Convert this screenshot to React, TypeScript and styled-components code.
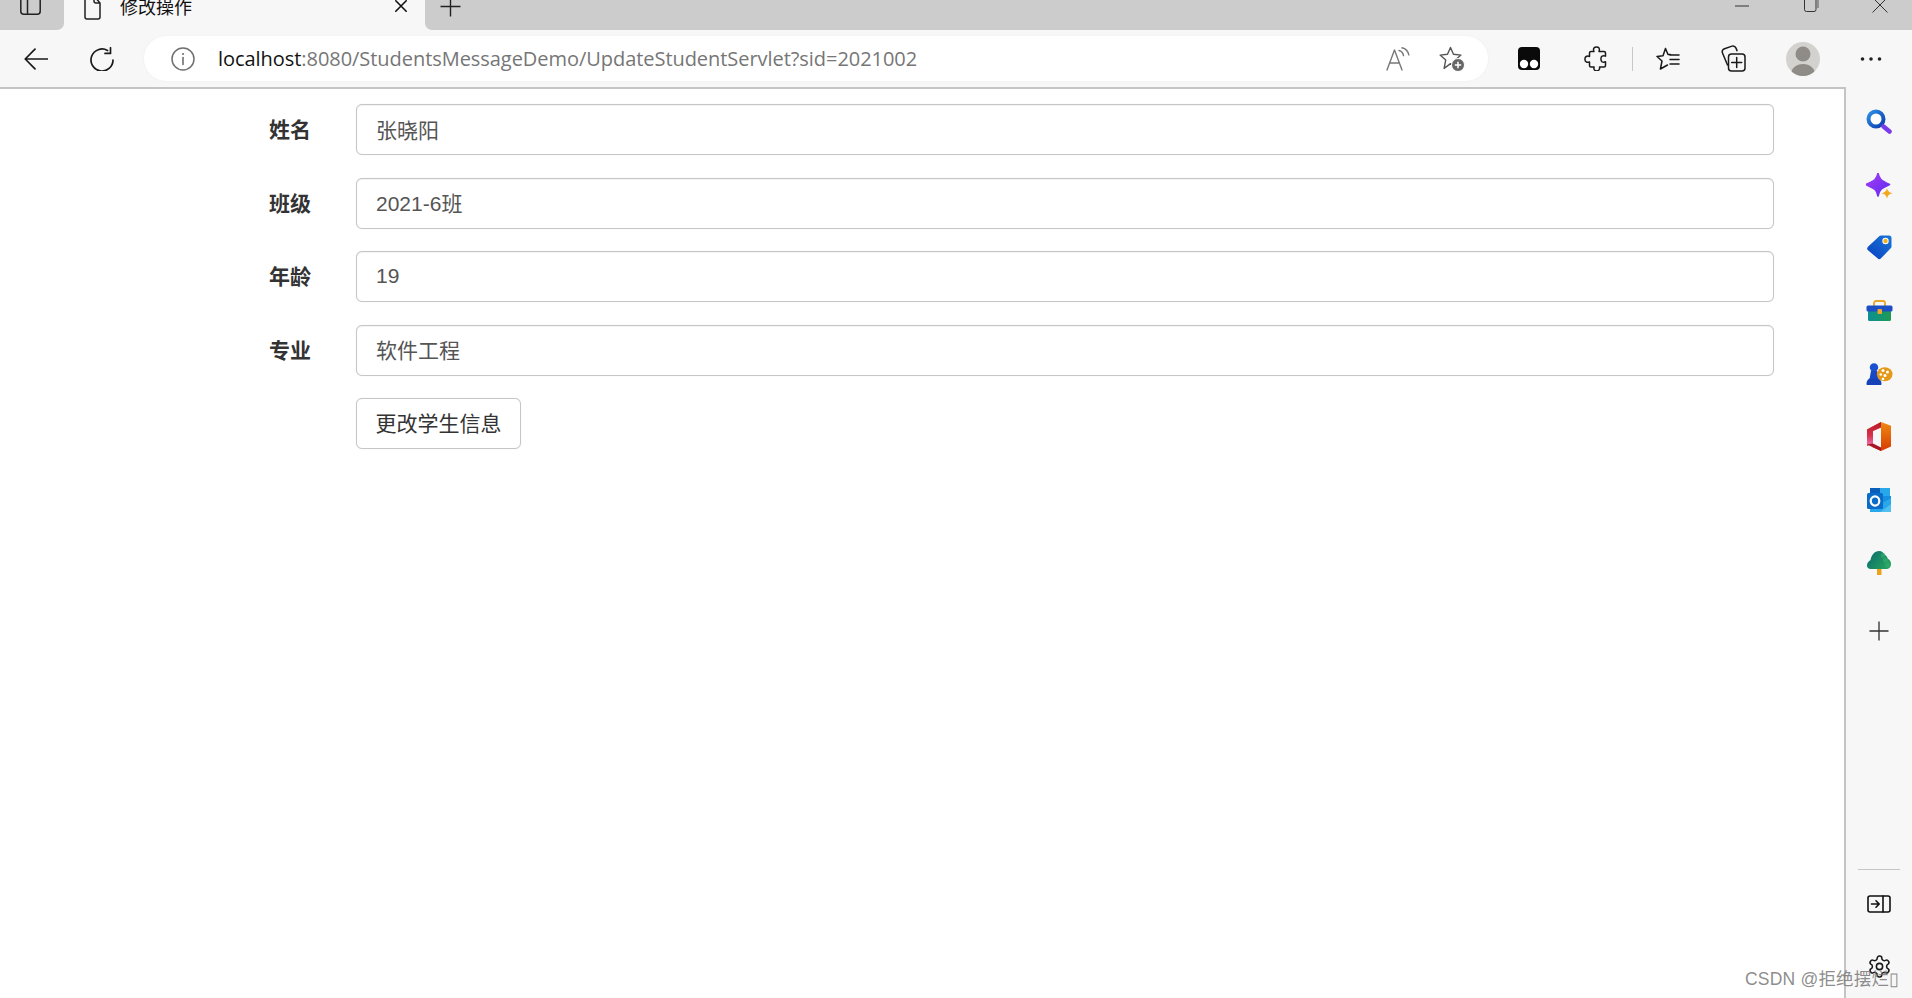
import React from "react";
import styled, { createGlobalStyle } from "styled-components";

const Global = createGlobalStyle`
  html, body { margin: 0; padding: 0; height: 100%; background: #fff; overflow: hidden; }
  #root { height: 100%; }
  * { box-sizing: border-box; }
`;

const CJK = `"Liberation Sans", "Noto Sans CJK SC", sans-serif`;

const Page = styled.div`
  position: relative;
  width: 1912px;
  height: 998px;
  display: flex;
  flex-direction: column;
  overflow: hidden;
  font-family: ${CJK};
`;

const TabStrip = styled.div`
  height: 30px;
  flex: none;
  display: flex;
  overflow: hidden;
  background: #f7f7f7;
`;

const StripPart = styled.div`
  height: 30px;
  padding-bottom: 18px;
  display: flex;
  align-items: center;
`;

const StripLeft = styled(StripPart)`
  width: 64px;
  padding-left: 20px;
  background: #cccccc;
  border-bottom-right-radius: 7px;
`;

const Tab = styled(StripPart)`
  width: 361px;
  padding-left: 20px;
  padding-right: 18px;
`;

const TabTitle = styled.span`
  flex: 1;
  margin-left: 19px;
  font-size: 18px;
  line-height: 20px;
  color: #111;
  font-family: "Noto Sans CJK SC", sans-serif;
`;

const StripRight = styled(StripPart)`
  flex: 1;
  padding-left: 15px;
  padding-right: 24px;
  background: #cccccc;
  border-bottom-left-radius: 7px;
`;

const Spacer = styled.div`
  flex: 1;
`;

const WindowButton = styled.span<{ $left: number }>`
  display: flex;
  margin-left: ${(p) => p.$left}px;
`;

const Toolbar = styled.div`
  height: 57px;
  flex: none;
  display: flex;
  align-items: center;
  padding: 0 29.5px 0 24px;
  background: #f7f7f7;
`;

const ToolSlot = styled.span<{ $left: number }>`
  display: flex;
  flex: none;
  align-items: center;
  justify-content: center;
  margin-left: ${(p) => p.$left}px;
`;

const ToolDivider = styled.span`
  flex: none;
  width: 1px;
  height: 24px;
  margin-left: 24px;
  background: #c8c8c8;
`;

const AddressBar = styled.div`
  flex: 1;
  height: 45px;
  margin-left: 30px;
  padding: 0 23px 0 27px;
  display: flex;
  align-items: center;
  background: #fff;
  border-radius: 23px;
  box-shadow: 0 0 3px rgba(0, 0, 0, 0.04);
`;

const Url = styled.div`
  flex: 1;
  margin-left: 23px;
  font-family: "Open Sans", sans-serif;
  font-size: 20px;
  letter-spacing: -0.05px;
  line-height: 24px;
  color: #767676;
  white-space: nowrap;
`;

const Host = styled.span`
  color: #111;
`;

const Body = styled.div`
  flex: 1;
  min-height: 0;
  display: flex;
`;

const Main = styled.main`
  flex: 1;
  border-top: 2px solid #c4c4c4;
  border-right: 2px solid #c4c4c4;
  background: #fff;
  padding: 15px 70px 0 269px;
`;

const Form = styled.form`
  display: flex;
  flex-direction: column;
  gap: 22.5px;
`;

const Row = styled.div`
  display: flex;
  align-items: center;
  height: 51px;
`;

const Label = styled.label`
  width: 87px;
  flex: none;
  padding-bottom: 3px;
  font-size: 21px;
  font-weight: 700;
  color: #333;
`;

const TextInput = styled.input`
  flex: 1;
  height: 51px;
  padding: 0 19px 2px;
  border: 1px solid #c6c6c6;
  border-radius: 6px;
  font-family: ${CJK};
  font-size: 21px;
  color: #555;
  background: #fff;
  outline: none;
  box-shadow: 0 0 1px rgba(0, 0, 0, 0.15), inset 0 1px 1px rgba(0, 0, 0, 0.05);
`;

const SubmitButton = styled.button`
  height: 51px;
  width: 165px;
  margin-left: 87px;
  padding: 0 0 4px;
  border: 1px solid #c6c6c6;
  border-radius: 6px;
  background: #fff;
  color: #333;
  font-family: ${CJK};
  font-size: 21px;
  box-shadow: 0 0 1px rgba(0, 0, 0, 0.15);
`;

const Sidebar = styled.aside`
  width: 66px;
  flex: none;
  display: flex;
  flex-direction: column;
  align-items: center;
  padding-top: 3px;
  background: #f7f7f7;
`;

const SideItem = styled.div<{ $drop?: number }>`
  height: 63px;
  width: 100%;
  flex: none;
  display: flex;
  align-items: center;
  justify-content: center;
  padding-top: ${(p) => p.$drop ?? 0}px;
`;

const SideRule = styled.div`
  width: 42px;
  height: 1px;
  flex: none;
  margin-top: auto;
  margin-bottom: 2px;
  background: #c6c6c6;
`;

const Watermark = styled.div`
  position: absolute;
  left: 1745px;
  top: 968px;
  font-family: "Liberation Sans", "Noto Sans CJK SC", sans-serif;
  font-size: 17.5px;
  line-height: 22px;
  letter-spacing: 0.2px;
  color: rgba(120, 120, 120, 0.85);
  white-space: nowrap;
`;

const Stroke = {
  fill: "none",
  stroke: "currentColor",
  strokeLinecap: "round" as const,
  strokeLinejoin: "round" as const,
};

const PanelIcon = () => (
  <svg width="21" height="18" viewBox="0 5 21 18" style={{ color: "#222" }}>
    <rect x="0.8" y="0.8" width="19.4" height="21.4" rx="3" {...Stroke} strokeWidth="1.5" />
    <path d="M7.5 1v21" {...Stroke} strokeWidth="1.5" />
  </svg>
);

const DocIcon = () => (
  <svg width="17" height="26" viewBox="0 0 17 26" style={{ marginTop: 2, color: "#222" }}>
    <path d="M1 3v20a2 2 0 0 0 2 2h11a2 2 0 0 0 2-2V9l-6-7H3a2 2 0 0 0-2 1z M10 2v5a2 2 0 0 0 2 2h4" {...Stroke} strokeWidth="1.5" />
  </svg>
);

const CloseSmall = () => (
  <svg width="12" height="12" viewBox="0 0 12 12" style={{ color: "#111" }}>
    <path d="M0.8 0.8l10.4 10.4M11.2 0.8L0.8 11.2" {...Stroke} strokeWidth="1.6" />
  </svg>
);

const PlusIcon = ({ size = 21, color = "#222" }: { size?: number; color?: string }) => (
  <svg width={size} height={size} viewBox="0 0 21 21" style={{ color }}>
    <path d="M10.5 0.5v20M0.5 10.5h20" fill="none" stroke="currentColor" strokeWidth="1.4" />
  </svg>
);

const Minimize = () => (
  <svg width="14" height="2" viewBox="0 0 14 2"><path d="M0 1h14" stroke="#333" strokeWidth="1" /></svg>
);

const Restore = () => (
  <svg width="15" height="20" viewBox="0 0 15 20" style={{ marginTop: -6 }}>
    <rect x="0.5" y="3.5" width="11.5" height="15" rx="2" fill="none" stroke="#333" />
    <path d="M14 3v12" stroke="#555" fill="none" />
  </svg>
);

const WindowClose = () => (
  <svg width="16" height="20" viewBox="0 0 16 20" style={{ marginTop: -2 }}>
    <path d="M0.5 2.5l15 15M15.5 2.5l-15 15" stroke="#333" fill="none" />
  </svg>
);

const BackIcon = () => (
  <svg width="24" height="22" viewBox="0 0 24 22" style={{ color: "#1a1a1a" }}>
    <path d="M1.5 11h22M11 1.2L1.2 11 11 20.8" {...Stroke} strokeWidth="1.7" />
  </svg>
);

const ReloadIcon = () => (
  <svg width="24" height="24" viewBox="0 0 24 24" style={{ color: "#1a1a1a" }}>
    <path d="M17.5 3.5A11 11 0 1 0 23 13" {...Stroke} strokeWidth="1.7" />
    <path d="M20.5 0.8V6.4H15" {...Stroke} strokeWidth="1.7" />
  </svg>
);

const InfoIcon = () => (
  <svg width="24" height="24" viewBox="0 0 24 24" style={{ color: "#707070" }}>
    <circle cx="12" cy="12" r="11" {...Stroke} strokeWidth="1.5" />
    <path d="M12 10.5v7" {...Stroke} strokeWidth="1.6" />
    <circle cx="12" cy="7" r="1.1" fill="currentColor" />
  </svg>
);

const ReadAloudIcon = () => (
  <svg width="24" height="24" viewBox="0 0 24 24" style={{ color: "#777" }}>
    <path d="M1 23L8.5 3l7.5 20M3.8 16h9.4" {...Stroke} strokeWidth="1.4" />
    <path d="M13 3.5c2.5.6 4 2.4 4.5 5M16 0.8c3.6.8 6 3.6 6.8 7" {...Stroke} strokeWidth="1.4" />
  </svg>
);

const FavAddIcon = () => (
  <svg width="26" height="26" viewBox="0 0 26 26" style={{ color: "#555" }}>
    <path d="M11.5 1.5l3 6.8 7.4.8-5.6 5 1.6 7.2-6.4-3.7-6.4 4.8 1.6-8.3-5.6-5 7.4-.8z" {...Stroke} strokeWidth="1.4" />
    <circle cx="19" cy="19" r="6.5" fill="#666" stroke="#fff" strokeWidth="1" />
    <path d="M19 15.8v6.4M15.8 19h6.4" stroke="#fff" strokeWidth="1.5" fill="none" />
  </svg>
);

const MonkeyIcon = () => (
  <svg width="22" height="23" viewBox="0 0 22 23">
    <rect width="22" height="23" rx="4" fill="#0a0a0a" />
    <circle cx="6" cy="17" r="4.2" fill="#fff" />
    <circle cx="16" cy="17" r="4.2" fill="#fff" />
  </svg>
);

const PuzzleIcon = () => (
  <svg width="24" height="25" viewBox="0 0 24 25" style={{ color: "#1a1a1a" }}>
    <path d="M7 5.5h3c-.5-1-1-2 0-3.5 1-1.3 4-1.3 5 0 .8 1.4.4 2.5 0 3.5h5a1.5 1.5 0 0 1 1.5 1.5v3.2c-1-.5-2.2-.6-3.4 0-1.600 1-1.6 4.600 0 5.600 1.200.6 2.400.4 3.400 0v3.700a1.500 1.500 0 0 1-1.500 1.500h-4.500c.3 1 .3 2-.6 3-1.100 1-3.300 1-4.400 0-.9-1-.7-2-.4-3H7a1.500 1.500 0 0 1-1.500-1.500v-3.500c-1 .4-2.200.6-3.300-.1-1.700-1.100-1.700-4.300 0-5.400 1.100-.7 2.300-.5 3.300 0V7A1.500 1.500 0 0 1 7 5.500z" {...Stroke} strokeWidth="1.5" />
  </svg>
);

const FavListIcon = () => (
  <svg width="24" height="24" viewBox="0 0 24 24" style={{ color: "#1a1a1a" }}>
    <path d="M9.500 1.500l2.500 6h2.500M1 9.500l6-.8 2.500-7.200M1 9.500l5 4.500-1.600 8 7.100-4" {...Stroke} strokeWidth="1.500" />
    <path d="M14 8h9M14 12.500h9M14 17h9" {...Stroke} strokeWidth="1.500" />
  </svg>
);

const CollectionsIcon = () => (
  <svg width="25" height="27" viewBox="0 0 25 27" style={{ color: "#1a1a1a" }}>
    <path d="M6.500 20L1.500 8c-.8-2 .2-3.600 2-4.300l7.500-2.600c1.800-.5 3.200.2 4 2l1 2.500" {...Stroke} strokeWidth="1.500" />
    <rect x="7.500" y="9" width="16.500" height="17" rx="3" fill="#f7f7f7" stroke="currentColor" strokeWidth="1.500" />
    <path d="M15.700 12.500v10M10.700 17.500h10" {...Stroke} strokeWidth="1.500" />
  </svg>
);

const AvatarIcon = () => (
  <svg width="34" height="34" viewBox="0 0 34 34">
    <defs>
      <clipPath id="avatarClip">
        <circle cx="17" cy="17" r="17" />
      </clipPath>
    </defs>
    <circle cx="17" cy="17" r="17" fill="#d3d2ce" />
    <circle cx="17" cy="12" r="7.500" fill="#8f8c88" />
    <path d="M5 33c0-7 5-11 12-11s12 4 12 11l-5 2H10z" fill="#8f8c88" clipPath="url(#avatarClip)" />
  </svg>
);

const DotsIcon = () => (
  <svg width="24" height="6" viewBox="0 0 24 6">
    <circle cx="3.500" cy="3" r="1.800" fill="#222" />
    <circle cx="12" cy="3" r="1.800" fill="#222" />
    <circle cx="20.500" cy="3" r="1.800" fill="#222" />
  </svg>
);

const SearchIcon = () => (
  <svg width="26" height="25" viewBox="0 0 26 25">
    <defs>
      <linearGradient id="searchRing" x1="0" y1="0" x2="1" y2="1">
        <stop offset="0" stopColor="#2f8fe6" />
        <stop offset="1" stopColor="#0b3fb0" />
      </linearGradient>
    </defs>
    <circle cx="10" cy="10" r="7.500" fill="#fff" stroke="url(#searchRing)" strokeWidth="4" />
    <path d="M17.500 17.500l6 5" stroke="#7a3bea" strokeWidth="4.500" strokeLinecap="round" />
  </svg>
);

const SparkleIcon = () => (
  <svg width="27" height="27" viewBox="0 0 27 27">
    <defs>
      <linearGradient id="sparkle" x1="0" y1="0" x2="1" y2="1">
        <stop offset="0" stopColor="#a63cf5" />
        <stop offset="1" stopColor="#5f2cf0" />
      </linearGradient>
    </defs>
    <path d="M12 0c1 6 3 7.500 11.500 11.500C15 15.500 13 17 12 23 11 17 9 15.500 0 11.500 9 7.500 11 6 12 0z" fill="url(#sparkle)" strokeWidth="1.600" stroke="url(#sparkle)" strokeLinejoin="round" />
    <path d="M21 15c.6 3 1.700 4.200 5.500 5.300-3.800 1-4.900 2.300-5.500 5.700-.6-3.400-1.700-4.700-5.500-5.700 3.800-1.100 4.900-2.300 5.500-5.300z" fill="#f2a81d" />
  </svg>
);

const TagIcon = () => (
  <svg width="25" height="25" viewBox="0 0 25 25">
    <defs>
      <linearGradient id="tag" x1="0" y1="1" x2="1" y2="0">
        <stop offset="0" stopColor="#0a3fc0" />
        <stop offset="1" stopColor="#1a78d8" />
      </linearGradient>
    </defs>
    <path d="M14 0.500h8a2.500 2.500 0 0 1 2.500 2.500v8.500a2.500 2.500 0 0 1-.8 1.800l-9.700 10a2.500 2.500 0 0 1-3.500 0L1 15.200a2.500 2.500 0 0 1 0-3.500L12.200 1.300A2.500 2.500 0 0 1 14 0.500z" fill="url(#tag)" />
    <circle cx="18.500" cy="6" r="3.200" fill="#fff" />
    <circle cx="18.500" cy="6" r="2.200" fill="#f3b21d" />
  </svg>
);

const ToolboxIcon = () => (
  <svg width="27" height="21" viewBox="0 0 27 21">
    <defs>
      <linearGradient id="boxBody" x1="0" y1="0" x2="1" y2="0">
        <stop offset="0" stopColor="#0c8f95" />
        <stop offset="1" stopColor="#1f9a53" />
      </linearGradient>
    </defs>
    <path d="M8 6V3a2 2 0 0 1 2-2h7a2 2 0 0 1 2 2v3" fill="none" stroke="#e9a724" strokeWidth="1.800" />
    <rect x="2" y="10" width="23" height="11" rx="1.500" fill="url(#boxBody)" />
    <rect x="0.500" y="5.500" width="26" height="6" rx="1.500" fill="#1d4fc4" />
    <rect x="11.500" y="9" width="4.500" height="5" rx="1" fill="#f0a62a" />
  </svg>
);

const ChessIcon = () => (
  <svg width="27" height="22" viewBox="0 0 27 22">
    <circle cx="8" cy="4.500" r="4.200" fill="#1c50d0" />
    <path d="M5 8h6l1.500 8h-9z" fill="#1a48c4" />
    <path d="M0.500 21c0-3.500 2-5.500 4-5.500h7c2 0 4 2 4 5.500 0 .6-.4 1-1 1H1.500c-.6 0-1-.4-1-1z" fill="#1642b8" />
    <ellipse cx="18.700" cy="11.300" rx="7.800" ry="7" fill="#e49a18" />
    <circle cx="17" cy="7.500" r="1.500" fill="#fff" />
    <circle cx="21.500" cy="9" r="1.500" fill="#fff" />
    <circle cx="14.800" cy="11.500" r="1.300" fill="#fff" />
    <circle cx="19" cy="12.500" r="1.500" fill="#fff" />
    <circle cx="17" cy="16" r="1.300" fill="#fff" />
  </svg>
);

const OfficeIcon = () => (
  <svg width="24" height="29" viewBox="0 0 24 29">
    <defs>
      <linearGradient id="off1" x1="0" y1="0" x2="0" y2="1">
        <stop offset="0" stopColor="#ee8a12" />
        <stop offset="1" stopColor="#d83b01" />
      </linearGradient>
      <linearGradient id="off2" x1="0" y1="0" x2="0" y2="1">
        <stop offset="0" stopColor="#b5172b" />
        <stop offset="0.6" stopColor="#d8324a" />
        <stop offset="1" stopColor="#e86bb0" />
      </linearGradient>
    </defs>
    <path d="M0 7.500L13 0.500 14 0l10 3.800v20.800L14 29l-1-.5-8-3.500 9 .8V5.500L6 9v12.500L0 24z" fill="url(#off1)" />
    <path d="M0 7.500L14 0v5.500L6 9v12.500L0 22.500z" fill="url(#off2)" />
    <path d="M0 22.500l6-1 8 4V29l-14-6.500z" fill="#a8152a" />
  </svg>
);

const OutlookIcon = () => (
  <svg width="24" height="24" viewBox="0 0 24 24">
    <rect x="3" y="0" width="20" height="12" fill="#0a5db8" />
    <rect x="13" y="0" width="10" height="8" fill="#28a8ea" />
    <rect x="13" y="8" width="11" height="8" fill="#1490df" />
    <path d="M3 12l10.500 4L24 10v14H3z" fill="#28a8ea" />
    <path d="M13.500 24l10.500-8v8z" fill="#50c0f0" />
    <rect x="0" y="5" width="16" height="16" rx="1.500" fill="#0a6cc8" />
    <ellipse cx="8" cy="13" rx="4.300" ry="4.600" fill="none" stroke="#fff" strokeWidth="2.200" />
  </svg>
);

const TreeIcon = () => (
  <svg width="24" height="24" viewBox="0 0 24 24">
    <defs>
      <linearGradient id="tree" x1="0" y1="0" x2="1" y2="0.600">
        <stop offset="0" stopColor="#0b6a70" />
        <stop offset="1" stopColor="#22a05c" />
      </linearGradient>
    </defs>
    <rect x="10" y="17" width="4.500" height="7" fill="#eea21c" />
    <path d="M12 0c3 0 5 2 5.500 4 2 .6 3 2 3 3.500 2.300 1 3.500 3 3.500 5.500 0 3-2 5-5 5H3.500C1.500 18 0 16.500 0 14.500c0-2 1.200-4 3.500-5.500C4.500 4 7.500 0 12 0z" fill="url(#tree)" />
    <circle cx="16" cy="4.500" r="2.400" fill="#33a96c" opacity="0.7" />
    <circle cx="18.500" cy="9" r="2.600" fill="#33a96c" opacity="0.7" />
    <circle cx="20.500" cy="14" r="2.600" fill="#33a96c" opacity="0.7" />
  </svg>
);

const CollapseIcon = () => (
  <svg width="24" height="18" viewBox="0 0 24 18" style={{ color: "#111" }}>
    <rect x="1" y="1" width="22" height="16" rx="2" {...Stroke} strokeWidth="1.600" />
    <path d="M16 1v16M4.500 9h7.500M9 5.800L12.200 9 9 12.200" {...Stroke} strokeWidth="1.600" />
  </svg>
);

const GearIcon = () => (
  <svg width="25" height="25" viewBox="0 0 24 24" style={{ color: "#1a1a1a" }}>
    <path d="M12.220 2h-.440a2 2 0 0 0-2 2v.180a2 2 0 0 1-1 1.730l-.430.250a2 2 0 0 1-2 0l-.150-.080a2 2 0 0 0-2.730.730l-.220.380a2 2 0 0 0 .730 2.730l.150.100a2 2 0 0 1 1 1.720v.510a2 2 0 0 1-1 1.740l-.150.090a2 2 0 0 0-.730 2.730l.220.380a2 2 0 0 0 2.730.730l.150-.080a2 2 0 0 1 2 0l.430.250a2 2 0 0 1 1 1.730V20a2 2 0 0 0 2 2h.440a2 2 0 0 0 2-2v-.180a2 2 0 0 1 1-1.730l.430-.250a2 2 0 0 1 2 0l.150.080a2 2 0 0 0 2.730-.730l.220-.390a2 2 0 0 0-.730-2.730l-.150-.080a2 2 0 0 1-1-1.740v-.500a2 2 0 0 1 1-1.740l.150-.090a2 2 0 0 0 .730-2.730l-.220-.380a2 2 0 0 0-2.730-.730l-.150.080a2 2 0 0 1-2 0l-.430-.250a2 2 0 0 1-1-1.730V4a2 2 0 0 0-2-2z" {...Stroke} strokeWidth="1.500" />
    <circle cx="12" cy="12" r="3" {...Stroke} strokeWidth="1.500" />
  </svg>
);

const fields = [
  { label: "姓名", value: "张晓阳" },
  { label: "班级", value: "2021-6班" },
  { label: "年龄", value: "19" },
  { label: "专业", value: "软件工程" },
];

const sideIcons = [
  { icon: <SearchIcon />, drop: 0 },
  { icon: <SparkleIcon />, drop: 4 },
  { icon: <TagIcon />, drop: 0 },
  { icon: <ToolboxIcon />, drop: 0 },
  { icon: <ChessIcon />, drop: 0 },
  { icon: <OfficeIcon />, drop: 0 },
  { icon: <OutlookIcon />, drop: 0 },
  { icon: <TreeIcon />, drop: 1 },
  { icon: <PlusIcon size={20} color="#333" />, drop: 10 },
];

export default function App() {
  return (
    <Page>
      <Global />
      <TabStrip>
        <StripLeft>
          <PanelIcon />
        </StripLeft>
        <Tab>
          <DocIcon />
          <TabTitle>修改操作</TabTitle>
          <CloseSmall />
        </Tab>
        <StripRight>
          <PlusIcon />
          <Spacer />
          <WindowButton $left={0}>
            <Minimize />
          </WindowButton>
          <WindowButton $left={55}>
            <Restore />
          </WindowButton>
          <WindowButton $left={53}>
            <WindowClose />
          </WindowButton>
        </StripRight>
      </TabStrip>
      <Toolbar>
        <ToolSlot $left={0}>
          <BackIcon />
        </ToolSlot>
        <ToolSlot $left={42}>
          <ReloadIcon />
        </ToolSlot>
        <AddressBar>
          <InfoIcon />
          <Url>
            <Host>localhost</Host>:8080/StudentsMessageDemo/UpdateStudentServlet?sid=2021002
          </Url>
          <ToolSlot $left={0}>
            <ReadAloudIcon />
          </ToolSlot>
          <ToolSlot $left={29}>
            <FavAddIcon />
          </ToolSlot>
        </AddressBar>
        <ToolSlot $left={30}>
          <MonkeyIcon />
        </ToolSlot>
        <ToolSlot $left={44}>
          <PuzzleIcon />
        </ToolSlot>
        <ToolDivider />
        <ToolSlot $left={23}>
          <FavListIcon />
        </ToolSlot>
        <ToolSlot $left={41}>
          <CollectionsIcon />
        </ToolSlot>
        <ToolSlot $left={40}>
          <AvatarIcon />
        </ToolSlot>
        <ToolSlot $left={39}>
          <DotsIcon />
        </ToolSlot>
      </Toolbar>
      <Body>
        <Main>
          <Form onSubmit={(e) => e.preventDefault()}>
            {fields.map((f) => (
              <Row key={f.label}>
                <Label>{f.label}</Label>
                <TextInput defaultValue={f.value} />
              </Row>
            ))}
            <Row>
              <SubmitButton type="submit">更改学生信息</SubmitButton>
            </Row>
          </Form>
        </Main>
        <Sidebar>
          {sideIcons.map((item, i) => (
            <SideItem key={i} $drop={item.drop}>
              {item.icon}
            </SideItem>
          ))}
          <SideRule />
          <SideItem>
            <CollapseIcon />
          </SideItem>
          <SideItem>
            <GearIcon />
          </SideItem>
        </Sidebar>
      </Body>
      <Watermark>CSDN @拒绝摆烂▯</Watermark>
    </Page>
  );
}
